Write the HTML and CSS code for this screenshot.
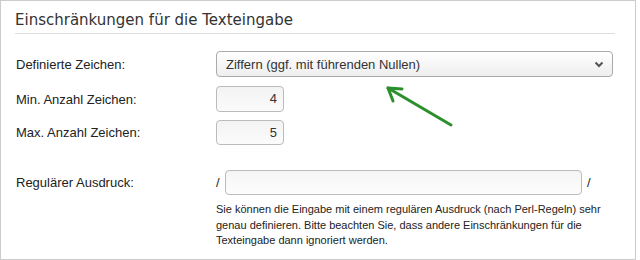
FILE: index.html
```html
<!DOCTYPE html>
<html lang="de">
<head>
	<meta charset="UTF-8">
	<title>Einschränkungen für die Texteingabe</title>
	<link rel="stylesheet" href="styles.css">
</head>
<body>
<div class="box">
	<h2 class="title">Einschränkungen für die Texteingabe</h2>

	<div class="row row-first">
		<label class="lbl">Definierte Zeichen:</label>
		<div class="select">
			<span>Ziffern (ggf. mit führenden Nullen)</span>
			<svg class="chev" width="10" height="7" viewBox="0 0 10 7"><path d="M1.5 1.5 L5 5 L8.5 1.5" fill="none" stroke="#555" stroke-width="2"/></svg>
		</div>
	</div>
	<div class="row row-num">
		<label class="lbl">Min. Anzahl Zeichen:</label>
		<div class="num">4</div>
	</div>
	<div class="row row-num2">
		<label class="lbl">Max. Anzahl Zeichen:</label>
		<div class="num">5</div>
	</div>
	<div class="row row-regex">
		<label class="lbl">Regulärer Ausdruck:</label>
		<div class="regex">
			<span class="slash">/</span>
			<div class="text-in"></div>
			<span class="slash">/</span>
		</div>
	</div>
	<p class="help">Sie können die Eingabe mit einem regulären Ausdruck (nach Perl-Regeln) sehr genau definieren. Bitte beachten Sie, dass andere Einschränkungen für die Texteingabe dann ignoriert werden.</p>

	<!-- Hinweis-Pfeil -->
	<svg class="arrow" width="80" height="55" viewBox="0 0 80 55">
		<g fill="none" stroke="#2b8f2b" stroke-width="3" stroke-linecap="round" stroke-linejoin="round">
			<path d="M7 9 L70 46"/>
			<path d="M21 10 L7 9 L12 22"/>
		</g>
	</svg>
</div>
</body>
</html>
```
FILE: styles.css
```css
* {
	margin: 0;
	padding: 0;
	box-sizing: border-box;
}
body {
	font-family: "Liberation Sans", Arial, sans-serif;
	font-size: 13px;
	color: #222;
	background: #fff;
}
.box {
	position: relative;
	width: 636px;
	height: 260px;
	border: 1px solid #ccc;
	padding: 10px 20px 0 14px;
}
.title {
	font-family: "DejaVu Sans", sans-serif;
	font-size: 15px;
	font-weight: normal;
	line-height: 18px;
	color: #333;
	padding-bottom: 4px;
	border-bottom: 1px solid #ddd;
}
.row {
	display: flex;
	align-items: center;
}
.lbl {
	width: 201px;
	padding-left: 1px;
}
.row-first {
	margin-top: 17px;
}
.row-num {
	margin-top: 9px;
}
.row-num2 {
	margin-top: 8px;
}
.row-regex {
	margin-top: 25px;
}
.select {
	flex: 1;
	height: 26px;
	margin-right: 2px;
	border: 1px solid #aaa;
	border-radius: 4px;
	background: linear-gradient(#fff, #eee);
	display: flex;
	align-items: center;
	justify-content: space-between;
	padding: 0 8px 0 9px;
	color: #333;
}
.chev {
	display: block;
}
.num {
	width: 68px;
	height: 26px;
	border: 1px solid #bbb;
	border-radius: 4px;
	background: linear-gradient(#f3f3f3, #fbfbfb);
	text-align: right;
	padding-right: 6px;
	line-height: 24px;
	color: #333;
}
.row-num2 .num {
	height: 25px;
	line-height: 23px;
}
.regex {
	display: flex;
	align-items: center;
}
.slash {
	width: 9px;
}
.text-in {
	width: 357px;
	height: 25px;
	border: 1px solid #bbb;
	border-radius: 4px;
	background: linear-gradient(#f5f5f5, #fdfdfd);
	margin-right: 5px;
}
.help {
	margin: 7px 0 0 201px;
	font-size: 11px;
	line-height: 15.6px;
	width: 390px;
}
.arrow {
	position: absolute;
	left: 380px;
	top: 78px;
}
```
